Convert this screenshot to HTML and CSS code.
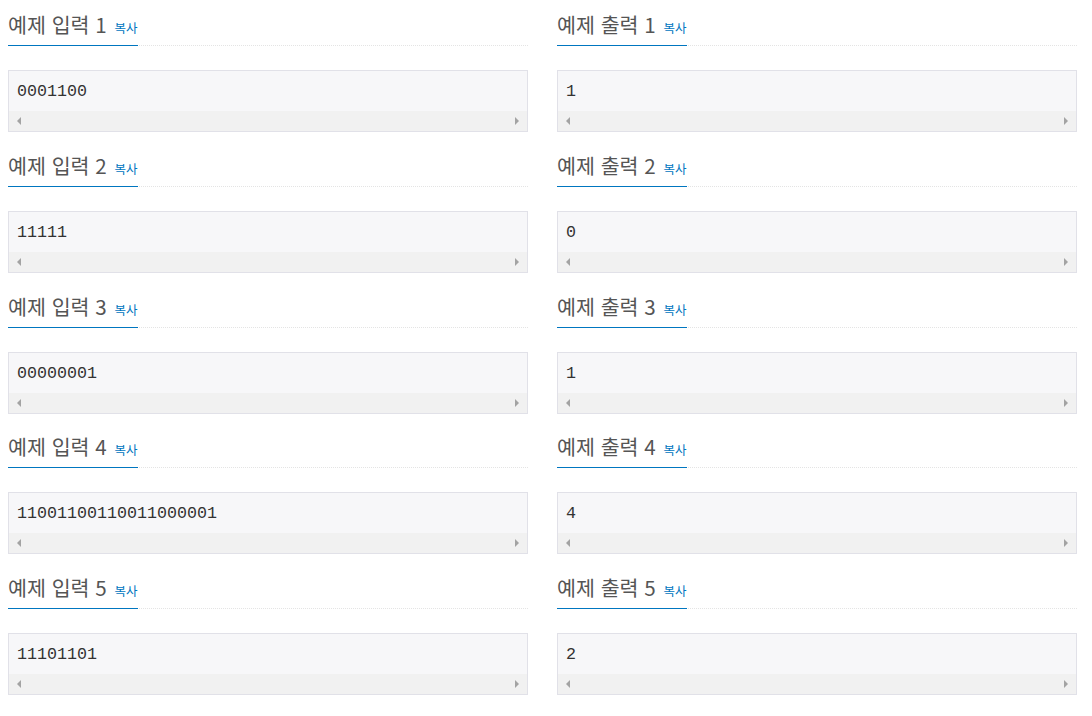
FILE: index.html
```html
<!DOCTYPE html>
<html lang="ko">
<head>
<meta charset="utf-8">
<title>예제</title>
<link rel="stylesheet" href="styles.css">
</head>
<body>
<div class="samples">
  <section class="sample">
    <div class="headline"><h2>예제 입력 1 <span class="copy">복사</span></h2></div>
    <div class="data"><pre>0001100</pre><div class="bar"><span class="arr l"></span><span class="arr r"></span></div></div>
  </section>
  <section class="sample">
    <div class="headline"><h2>예제 출력 1 <span class="copy">복사</span></h2></div>
    <div class="data"><pre>1</pre><div class="bar"><span class="arr l"></span><span class="arr r"></span></div></div>
  </section>
  <section class="sample">
    <div class="headline"><h2>예제 입력 2 <span class="copy">복사</span></h2></div>
    <div class="data"><pre>11111</pre><div class="bar"><span class="arr l"></span><span class="arr r"></span></div></div>
  </section>
  <section class="sample">
    <div class="headline"><h2>예제 출력 2 <span class="copy">복사</span></h2></div>
    <div class="data"><pre>0</pre><div class="bar"><span class="arr l"></span><span class="arr r"></span></div></div>
  </section>
  <section class="sample">
    <div class="headline"><h2>예제 입력 3 <span class="copy">복사</span></h2></div>
    <div class="data"><pre>00000001</pre><div class="bar"><span class="arr l"></span><span class="arr r"></span></div></div>
  </section>
  <section class="sample">
    <div class="headline"><h2>예제 출력 3 <span class="copy">복사</span></h2></div>
    <div class="data"><pre>1</pre><div class="bar"><span class="arr l"></span><span class="arr r"></span></div></div>
  </section>
  <section class="sample">
    <div class="headline"><h2>예제 입력 4 <span class="copy">복사</span></h2></div>
    <div class="data"><pre>11001100110011000001</pre><div class="bar"><span class="arr l"></span><span class="arr r"></span></div></div>
  </section>
  <section class="sample">
    <div class="headline"><h2>예제 출력 4 <span class="copy">복사</span></h2></div>
    <div class="data"><pre>4</pre><div class="bar"><span class="arr l"></span><span class="arr r"></span></div></div>
  </section>
  <section class="sample">
    <div class="headline"><h2>예제 입력 5 <span class="copy">복사</span></h2></div>
    <div class="data"><pre>11101101</pre><div class="bar"><span class="arr l"></span><span class="arr r"></span></div></div>
  </section>
  <section class="sample">
    <div class="headline"><h2>예제 출력 5 <span class="copy">복사</span></h2></div>
    <div class="data"><pre>2</pre><div class="bar"><span class="arr l"></span><span class="arr r"></span></div></div>
  </section>
</div>
</body>
</html>
```
FILE: styles.css
```css
html, body {
  margin: 0;
  padding: 0;
  background: #fff;
}
body {
  padding: 0 8px;
  font-family: "Noto Sans CJK KR", sans-serif;
  color: #555;
}
.samples {
  display: grid;
  grid-template-columns: 520px 520px;
  column-gap: 29px;
}
.sample {
  height: 140.75px;
}
.headline {
  margin-top: 10px;
  height: 35px;
  border-bottom: 1px dotted #e4e4e4;
  display: flex;
}
.headline h2 {
  margin: 0;
  padding: 0;
  height: 35px;
  box-sizing: content-box;
  font-family: "Noto Sans CJK KR", sans-serif;
  font-weight: 400;
  font-size: 20.6px;
  line-height: 28px;
  color: #555;
  border-bottom: 1px solid #0076c0;
  white-space: nowrap;
}
.copy {
  font-size: 12.5px;
  line-height: 1;
  color: #0076c0;
  margin-left: 2px;
}
.data {
  margin-top: 24px;
  border: 1px solid #e1e1e8;
  background: #f7f7f9;
}
.data pre {
  margin: 0;
  padding: 11px 8px 9px 8px;
  height: 20px;
  font-family: "Liberation Mono", monospace;
  font-size: 16.67px;
  line-height: 20px;
  color: #333;
}
.bar {
  height: 20px;
  background: #f1f1f1;
  display: flex;
  justify-content: space-between;
  align-items: center;
  padding: 0 8px 0 8px;
}
.arr {
  width: 0;
  height: 0;
  border-top: 4px solid transparent;
  border-bottom: 4px solid transparent;
}
.arr.l {
  border-right: 4px solid #a3a3a3;
}
.arr.r {
  border-left: 4px solid #a3a3a3;
}
```
